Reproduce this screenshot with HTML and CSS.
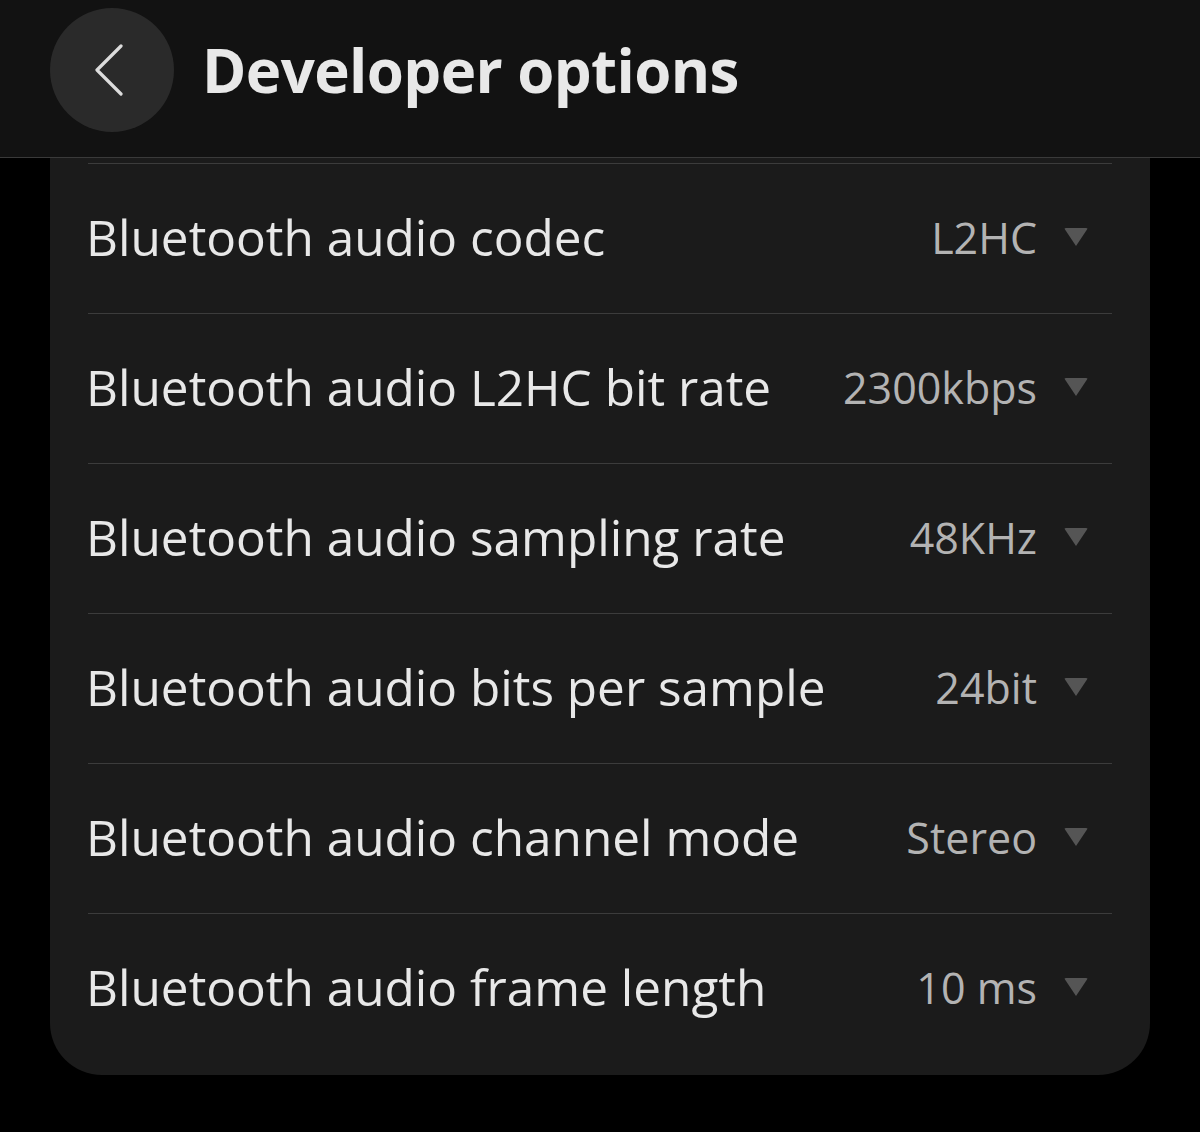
FILE: index.html
```html
<!DOCTYPE html>
<html lang="en">
<head>
  <meta charset="UTF-8" />
  <title>Developer options</title>
  <link rel="stylesheet" href="styles.css">
</head>
<body>
  <header class="topbar">
    <button class="back" aria-label="Back">
      <svg width="30" height="52" viewBox="0 0 30 52"><path d="M27 2 L3 26 L27 50" fill="none" stroke="#dcdcdc" stroke-width="3.2" stroke-linecap="round" stroke-linejoin="round"/></svg>
    </button>
    <h1>Developer options</h1>
  </header>

  <main class="card">
    <div class="row">
      <span class="label">Bluetooth audio codec</span>
      <span class="value">L2HC</span>
      <span class="caret"></span>
    </div>
    <div class="row">
      <span class="label">Bluetooth audio L2HC bit rate</span>
      <span class="value">2300kbps</span>
      <span class="caret"></span>
    </div>
    <div class="row">
      <span class="label">Bluetooth audio sampling rate</span>
      <span class="value">48KHz</span>
      <span class="caret"></span>
    </div>
    <div class="row">
      <span class="label">Bluetooth audio bits per sample</span>
      <span class="value">24bit</span>
      <span class="caret"></span>
    </div>
    <div class="row">
      <span class="label">Bluetooth audio channel mode</span>
      <span class="value">Stereo</span>
      <span class="caret"></span>
    </div>
    <div class="row">
      <span class="label">Bluetooth audio frame length</span>
      <span class="value">10 ms</span>
      <span class="caret"></span>
    </div>
  </main>
</body>
</html>
```

FILE: styles.css
```css
body {
  margin: 0;
  background-color: #000;
  font-family: "Open Sans", "Noto Sans", sans-serif;
  color: #e6e6e6;
}
.topbar {
  height: 158px;
  background-color: #121212;
  border-bottom: 1px solid #3a3a3a;
  display: flex;
  align-items: center;
  padding-left: 50px;
  gap: 28px;
  box-sizing: border-box;
  padding-bottom: 18px;
}
.back {
  width: 124px;
  height: 124px;
  border-radius: 50%;
  border: none;
  background-color: #2a2a2a;
  display: flex;
  align-items: center;
  justify-content: center;
  padding: 0 6px 0 0;
}
.topbar h1 {
  margin: 0;
  font-size: 60px;
  font-weight: 700;
  color: #e8e8e8;
  letter-spacing: -0.6px;
}
.card {
  margin: 0 50px;
  background-color: #1b1b1b;
  border-radius: 0 0 52px 52px;
  padding: 5px 38px 12px;
}
.row {
  display: flex;
  align-items: center;
  height: 150px;
  border-top: 1.5px solid #3c3c3c;
  box-sizing: border-box;
  padding-bottom: 3px;
}
.label {
  flex: 1;
  font-size: 49.5px;
  color: #e8e8e8;
  margin-left: -2px;
}
.value {
  font-size: 43px;
  color: #b3b3b3;
}
.caret {
  width: 0;
  height: 0;
  margin: 0 24px 0 27px;
  border-left: 12px solid transparent;
  border-right: 12px solid transparent;
  border-top: 18px solid #555;
  border-radius: 2px;
}
```
